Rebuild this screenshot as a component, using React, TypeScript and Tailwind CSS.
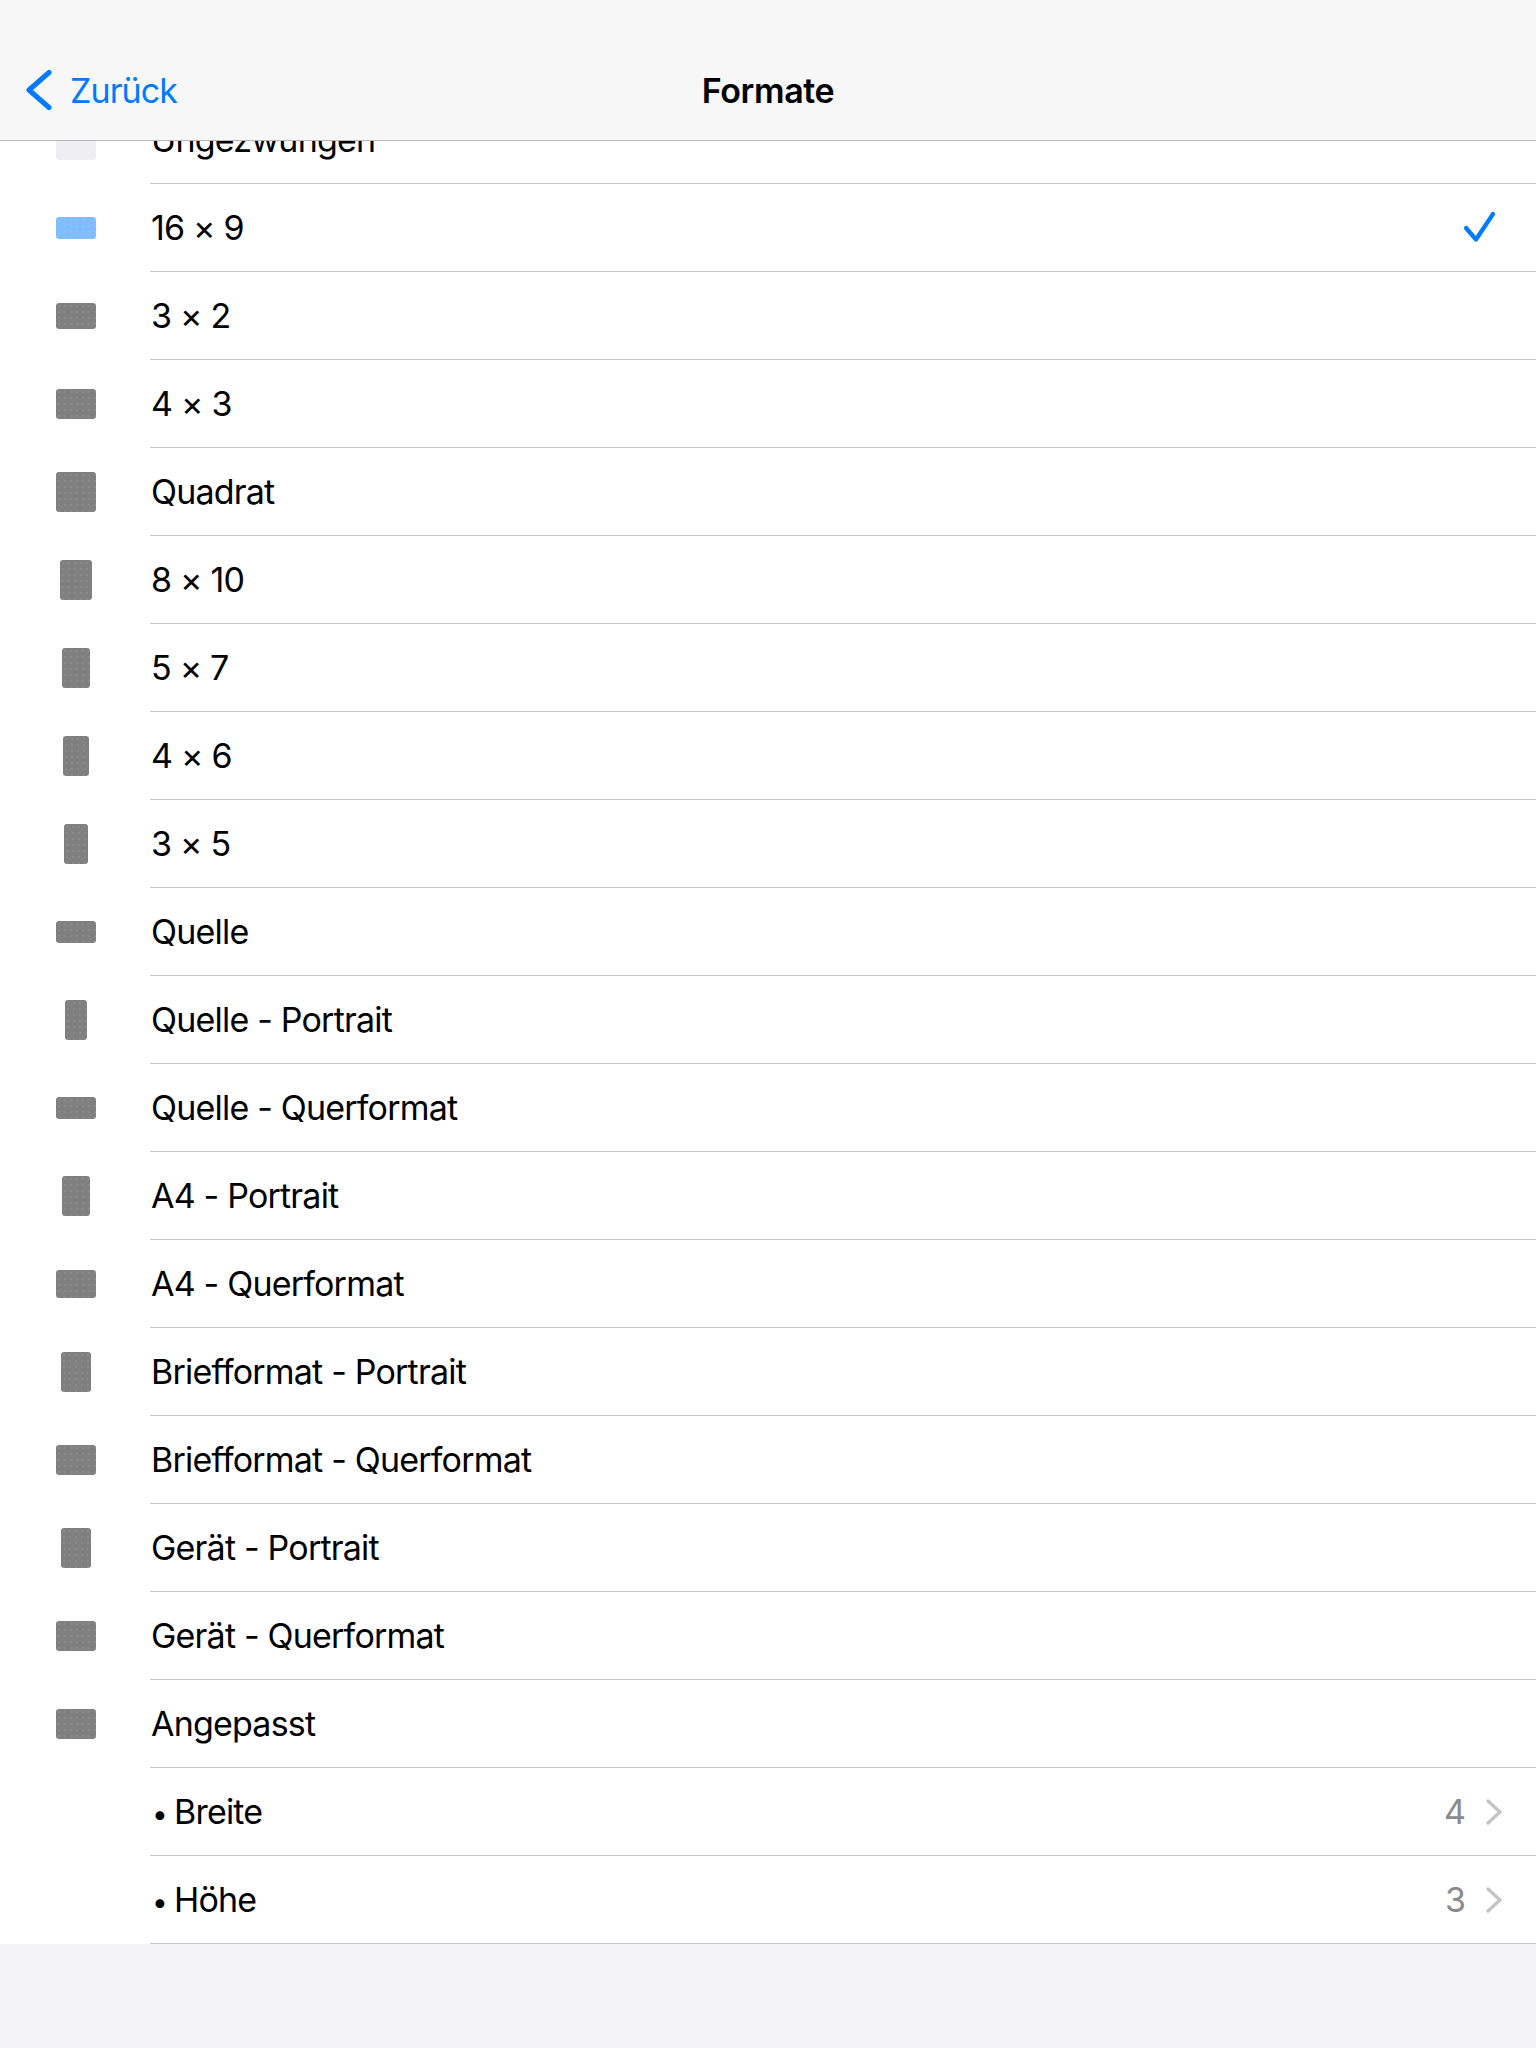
import React from "react";

type Row = {
  label: string;
  size?: string;
  tone?: "gray" | "blue" | "light";
  checked?: boolean;
  value?: string;
  bullet?: boolean;
};

const rows: Row[] = [
  { label: "Ungezwungen", size: "w-[40px] h-[40px]", tone: "light" },
  { label: "16 × 9", size: "w-[40px] h-[22px]", tone: "blue", checked: true },
  { label: "3 × 2", size: "w-[40px] h-[26px]" },
  { label: "4 × 3", size: "w-[40px] h-[30px]" },
  { label: "Quadrat", size: "w-[40px] h-[40px]" },
  { label: "8 × 10", size: "w-[32px] h-[40px]" },
  { label: "5 × 7", size: "w-[28px] h-[40px]" },
  { label: "4 × 6", size: "w-[26px] h-[40px]" },
  { label: "3 × 5", size: "w-[24px] h-[40px]" },
  { label: "Quelle", size: "w-[40px] h-[22px]" },
  { label: "Quelle - Portrait", size: "w-[22px] h-[40px]" },
  { label: "Quelle - Querformat", size: "w-[40px] h-[22px]" },
  { label: "A4 - Portrait", size: "w-[28px] h-[40px]" },
  { label: "A4 - Querformat", size: "w-[40px] h-[28px]" },
  { label: "Briefformat - Portrait", size: "w-[30px] h-[40px]" },
  { label: "Briefformat - Querformat", size: "w-[40px] h-[30px]" },
  { label: "Gerät - Portrait", size: "w-[30px] h-[40px]" },
  { label: "Gerät - Querformat", size: "w-[40px] h-[30px]" },
  { label: "Angepasst", size: "w-[40px] h-[30px]" },
  { label: "Breite", bullet: true, value: "4" },
  { label: "Höhe", bullet: true, value: "3" },
];

const toneClass: Record<string, string> = {
  gray: "bg-[#808080]",
  blue: "bg-[#80bcff]",
  light: "bg-[#efeff3]",
};

function ListRow({ row }: { row: Row }) {
  return (
    <div className="flex h-[88px] bg-white">
      <div className="w-[150px] shrink-0 flex items-center justify-center pl-[2px]">
        {row.size && (
          <div
            className={`${row.size} ${toneClass[row.tone ?? "gray"]} rounded-[3px] bg-[radial-gradient(circle,rgba(255,255,255,0.07)_0.8px,transparent_1px)] bg-[length:6px_6px]`}
          />
        )}
      </div>
      <div className="flex-1 flex items-center border-b border-[#c6c6c8] pl-[1px] pr-[34px]">
        <div className="flex-1 text-[34px] text-black tracking-[-0.8px]">
          {row.bullet ? (
            <span>
              <span className="inline-block w-[23px] pl-[1px] text-[28px]">•</span>
              {row.label}
            </span>
          ) : (
            row.label
          )}
        </div>
        {row.checked && (
          <svg width="34" height="34" viewBox="0 0 34 34" className="mr-[6px]">
            <polyline
              points="4,17 14,28.5 31,3"
              fill="none"
              stroke="#007aff"
              strokeWidth="4.2"
              strokeLinecap="round"
              strokeLinejoin="round"
            />
          </svg>
        )}
        {row.value && (
          <div className="flex items-center gap-[20px]">
            <span className="text-[34px] text-[#8a8a8e]">{row.value}</span>
            <svg width="16" height="26" viewBox="0 0 16 26">
              <polyline
                points="2,2 14,13 2,24"
                fill="none"
                stroke="#c4c4c7"
                strokeWidth="3.4"
                strokeLinecap="round"
                strokeLinejoin="round"
              />
            </svg>
          </div>
        )}
      </div>
    </div>
  );
}

export default function App() {
  return (
    <div className="w-[1536px] h-[2048px] bg-[#f2f2f7] flex flex-col overflow-hidden font-['Inter','Noto_Sans',sans-serif]">
      <header className="relative z-10 h-[141px] shrink-0 bg-[#f7f7f7] border-b border-[#b8b8bb] flex flex-col justify-end">
        <div className="h-[100px] grid grid-cols-[1fr_auto_1fr] items-center">
          <div className="flex items-center pl-[25px]">
            <svg width="30" height="42" viewBox="0 0 30 42">
              <polyline
                points="24,3.5 4,21 24,38.5"
                fill="none"
                stroke="#007aff"
                strokeWidth="5"
                strokeLinecap="round"
                strokeLinejoin="round"
              />
            </svg>
            <span className="ml-[15px] text-[34px] text-[#007aff] tracking-[-0.9px]">Zurück</span>
          </div>
          <div className="text-[34px] font-semibold text-black tracking-[-0.4px]">Formate</div>
          <div />
        </div>
      </header>
      <div className="flex-1 overflow-hidden">
        <div className="mt-[-45px]">
          {rows.map((r) => (
            <ListRow key={r.label} row={r} />
          ))}
        </div>
      </div>
    </div>
  );
}
